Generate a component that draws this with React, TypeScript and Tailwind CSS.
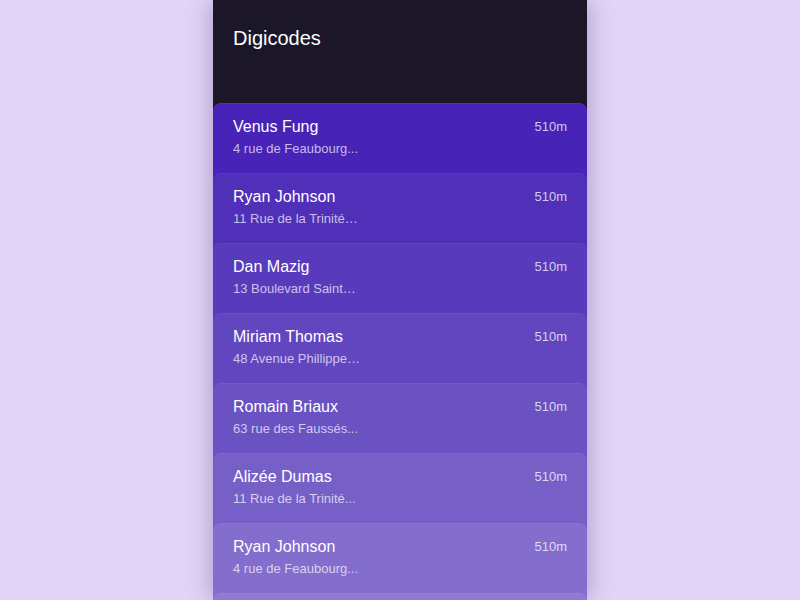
const contacts = [
  { name: "Venus Fung", address: "4 rue de Feaubourg...", bg: "bg-[#4823b7]" },
  { name: "Ryan Johnson", address: "11 Rue de la Trinité…", bg: "bg-[#5030b9]" },
  { name: "Dan Mazig", address: "13 Boulevard Saint…", bg: "bg-[#583bbc]" },
  { name: "Miriam Thomas", address: "48 Avenue Phillippe…", bg: "bg-[#6146bf]" },
  { name: "Romain Briaux", address: "63 rue des Faussés...", bg: "bg-[#6a52c3]" },
  { name: "Alizée Dumas", address: "11 Rue de la Trinité...", bg: "bg-[#775fc8]" },
  { name: "Ryan Johnson", address: "4 rue de Feaubourg...", bg: "bg-[#836dcd]" },
  { name: "Venus Fung", address: "4 rue de Feaubourg...", bg: "bg-[#8d7ad2]" },
];

const underlay = [
  "bg-[#1b1628]",
  "bg-[#4823b7]",
  "bg-[#5030b9]",
  "bg-[#583bbc]",
  "bg-[#6146bf]",
  "bg-[#6a52c3]",
  "bg-[#775fc8]",
  "bg-[#836dcd]",
];

export default function App() {
  return (
    <div className="h-[600px] w-full overflow-hidden bg-[#e0d5f6] font-['Liberation_Sans',Arial,sans-serif]">
      <div className="mx-auto h-[600px] w-[374px] overflow-hidden bg-[#1b1628] shadow-[0_0_24px_rgba(60,30,120,0.35)]">
        {/* Header */}
        <div className="h-[103px] px-5 pt-[26px]">
          <h1 className="text-[20px] leading-6 text-white">Digicodes</h1>
        </div>
        {/* List */}
        <div>
          {contacts.map((c, i) => (
            <div key={i} className={underlay[i]}>
              <div
                className={`${c.bg} h-[70px] rounded-t-lg border-t border-white/5 px-5 pt-[13px]`}
              >
                <div className="flex items-start justify-between">
                  <span className="text-[16px] leading-[20px] text-white">{c.name}</span>
                  <span className="text-[13px] leading-[20px] text-white/75">510m</span>
                </div>
                <div className="mt-[4px] text-[13px] leading-[16px] text-white/70">
                  {c.address}
                </div>
              </div>
            </div>
          ))}
        </div>
      </div>
    </div>
  );
}
